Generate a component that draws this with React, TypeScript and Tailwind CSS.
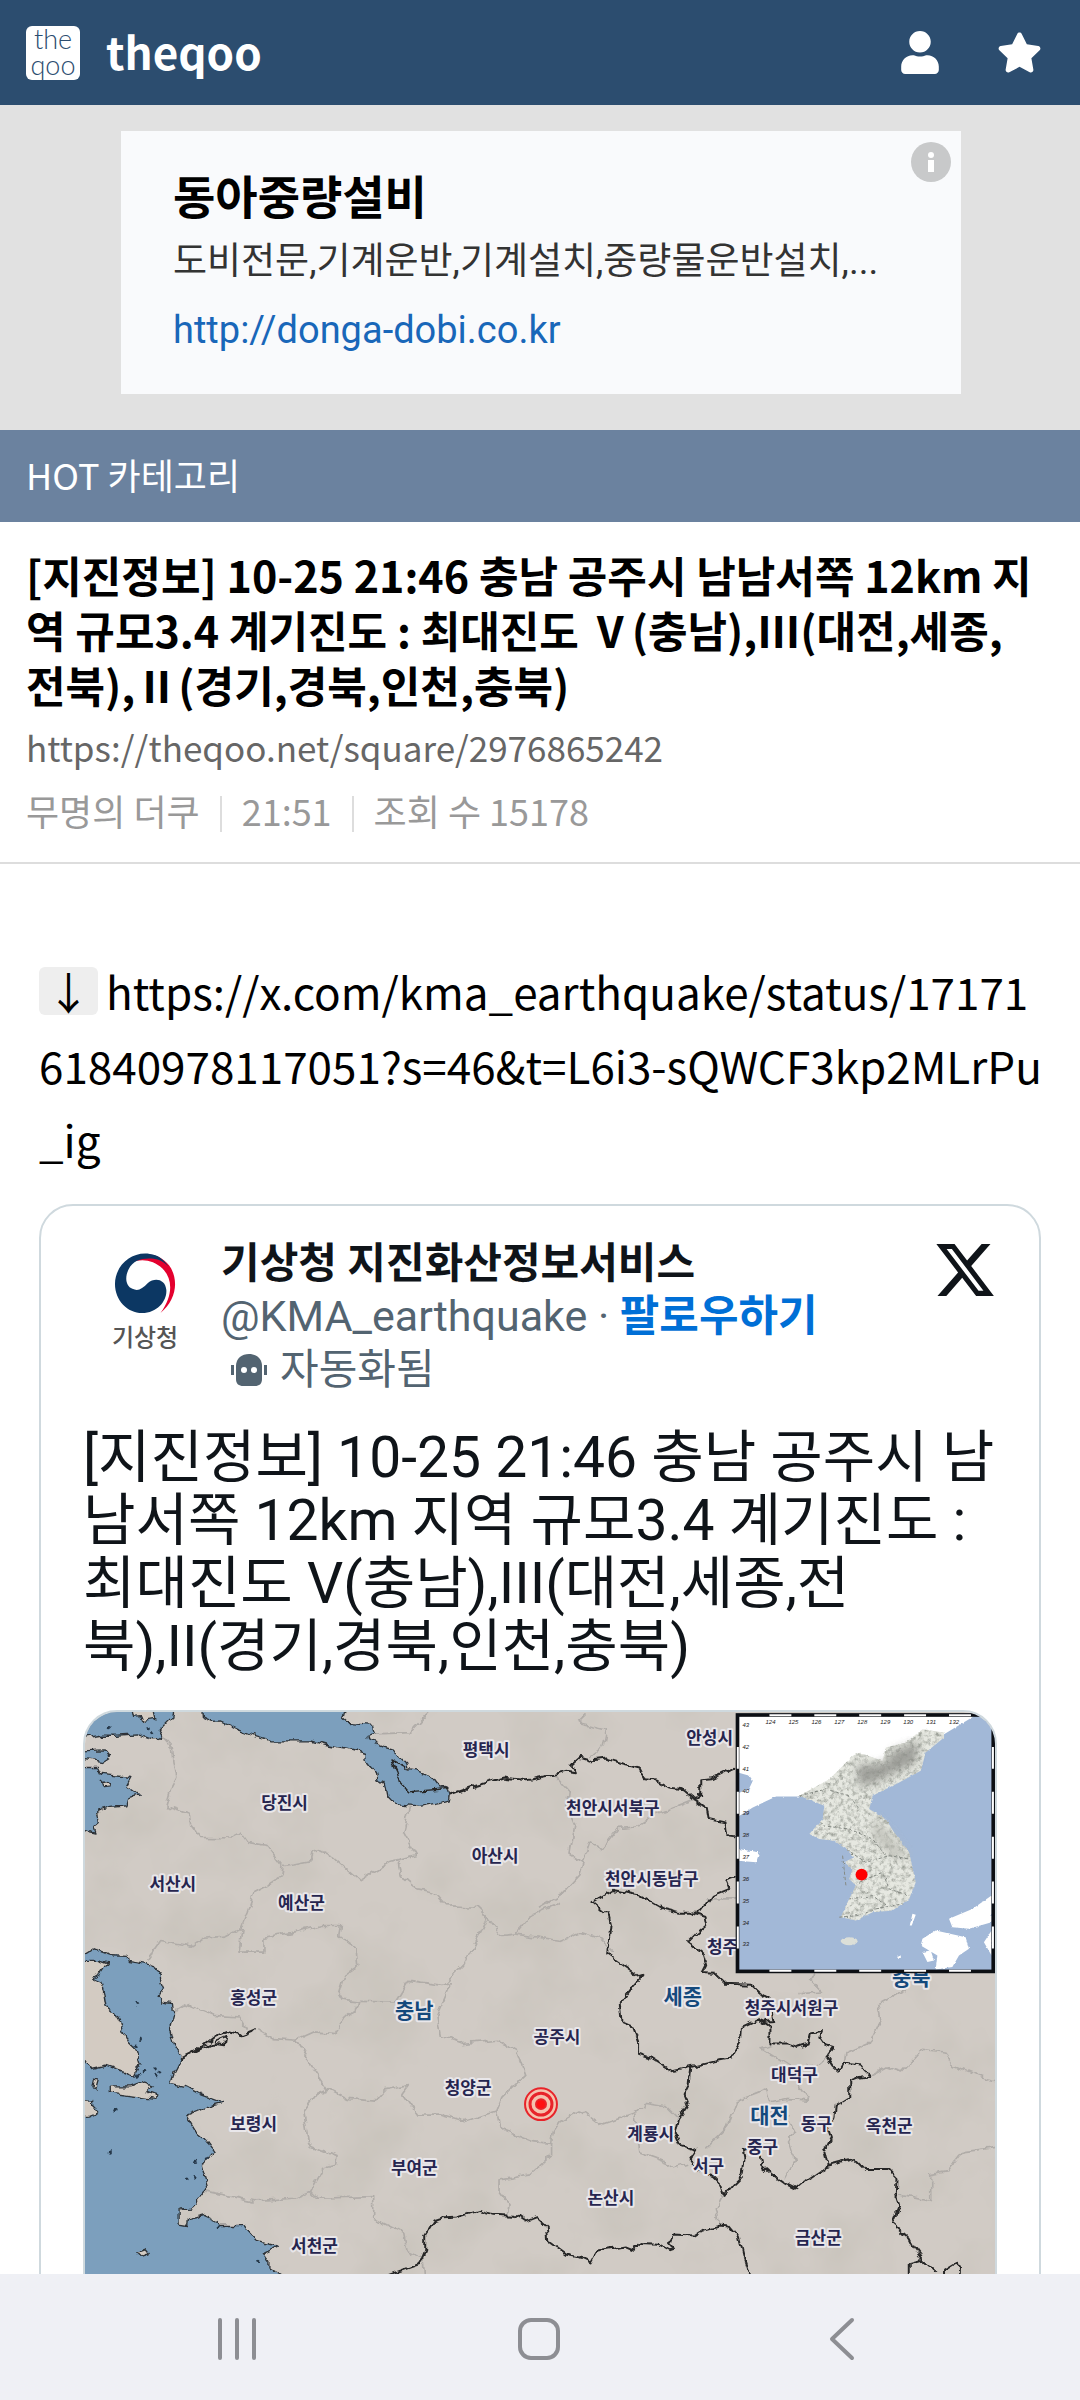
import type { ReactNode } from "react";
import { FaStar, FaUser } from "react-icons/fa";
import { FaXTwitter } from "react-icons/fa6";

type MapLabel = { name: string; x: number; y: number; major?: boolean };

const cities: MapLabel[] = [
  { name: "평택시", x: 402, y: 38 },
  { name: "당진시", x: 200, y: 91 },
  { name: "아산시", x: 411, y: 144 },
  { name: "서산시", x: 88, y: 172 },
  { name: "예산군", x: 217, y: 191 },
  { name: "안성시", x: 626, y: 26 },
  { name: "천안시서북구", x: 529, y: 96 },
  { name: "천안시동남구", x: 568, y: 167 },
  { name: "청주", x: 639, y: 236 },
  { name: "충북", x: 828, y: 267, major: true },
  { name: "세종", x: 599, y: 286, major: true },
  { name: "홍성군", x: 169, y: 287 },
  { name: "충남", x: 330, y: 300, major: true },
  { name: "공주시", x: 473, y: 326 },
  { name: "청양군", x: 384, y: 377 },
  { name: "보령시", x: 169, y: 413 },
  { name: "부여군", x: 330, y: 457 },
  { name: "서천군", x: 230, y: 535 },
  { name: "청주시서원구", x: 708, y: 297 },
  { name: "대덕구", x: 711, y: 364 },
  { name: "대전", x: 686, y: 405, major: true },
  { name: "동구", x: 733, y: 413 },
  { name: "중구", x: 679, y: 436 },
  { name: "서구", x: 625, y: 455 },
  { name: "계룡시", x: 567, y: 423 },
  { name: "논산시", x: 527, y: 487 },
  { name: "옥천군", x: 806, y: 415 },
  { name: "금산군", x: 735, y: 527 },
];

// sea areas on the main map
const seas = [
  "M0 118L60 108 110 108 165 104 215 122 235 120 245 112 235 95 275 55 278 42 278 20 0 20Z",
  "M360 20L362 52 392 66 420 65 470 88 520 108 575 125 690 125 735 138 800 150 855 165 860 190 885 220 890 240 912 248 920 290 945 315 1015 325 1085 312 1108 305 1110 290 1103 268 1080 262 1060 235 1035 220 1010 212 980 208 975 190 950 165 940 150 905 140 880 130 862 122 860 108 885 102 880 78 800 72 785 58 795 20Z",
  "M0 155L70 152 88 175 65 190 0 180Z",
  "M0 205L50 205 60 225 85 228 150 235 135 262 175 290 140 300 135 320 90 325 50 335 55 370 38 385 45 405 0 395Z",
  "M0 775L40 750 90 768 138 770 142 785 190 793 225 805 238 825 240 850 248 868 235 890 245 910 275 915 278 945 268 985 280 1035 300 1070 298 1090 280 1125 270 1155 320 1165 365 1190 425 1212 375 1225 315 1250 345 1300 375 1325 400 1360 365 1400 382 1460 350 1500 352 1520 335 1530 295 1532 295 1578 318 1582 320 1565 370 1552 410 1570 415 1585 490 1585 525 1625 590 1645 548 1665 565 1690 565 1710 620 1740 620 2000 0 2000Z",
];

const islands = [
  "M0 785L50 785 80 795 70 810 60 825 35 840 60 850 70 890 75 920 100 940 115 965 125 995 140 1030 165 1055 178 1095 160 1130 120 1115 75 1100 30 1110 0 1065Z",
  "M85 1165L150 1165 190 1150 215 1160 195 1180 228 1192 222 1203 85 1183Z",
  "M0 1205L35 1205 35 1225 50 1240 25 1250 0 1252Z",
  "M40 1142L52 1145 45 1170 36 1168Z",
  "M168 1660L190 1652 202 1667 182 1674Z",
  "M150 30L215 30 222 60 185 66 180 52 155 54Z",
  "M58 250L80 247 85 260 62 263Z",
];

const districts = [
  "M245 112L275 145 280 190 288 235 270 270 255 322 325 345 330 375 360 415 455 417 485 402 505 430 560 440 605 500 600 530 560 560 520 580 500 640 480 690 430 715 365 722 335 742 240 725 200 782",
  "M605 500L640 495 690 485 695 460 720 455 760 475 840 545 930 490 1008 470 970 400 988 325",
  "M950 490L960 530 1010 570 1060 580 1095 620 1190 625 1222 655 1265 710 1305 705 1350 650 1440 610",
  "M485 690L475 760 550 760 550 715 640 700 720 680 780 680 775 710 830 750 835 800 790 830 775 880 790 905 835 910L830 930 795 960 765 1005 700 1000 645 1025 580 1020 530 990",
  "M645 1025L680 1080 740 1170 800 1200 880 1208 910 1175 985 1158 965 1185 1010 1250 1080 1250 1150 1270 1250 1238 1265 1200 1335 1130 1310 1060 1250 1025 1150 1035 1080 1010 1070 950 1110 855 1085 860 985 845 945 910 835 908",
  "M1090 860L1150 800 1205 690 1222 655",
  "M1305 705L1440 725 1500 700 1560 720 1600 760",
  "M745 1170L710 1185 670 1240 685 1340 770 1375 765 1400 730 1410 690 1480 640 1500 520 1508 370 1478",
  "M690 1480L710 1500 880 1495 880 1560 970 1605 980 1660 1025 1680 1030 1740",
  "M1250 1238L1260 1290 1360 1330 1415 1335 1420 1300 1440 1270 1500 1235 1560 1280 1660 1245 1700 1215 1760 1225 1795 1260",
  "M1415 1335L1415 1370 1350 1430 1260 1445 1260 1480 1290 1520 1285 1550",
  "M280 940L320 915 400 950 480 955 500 990",
  "M885 104L990 100 1045 38",
  "M1520 45L1495 70 1580 90 1570 140 1530 170",
  "M1425 230L1465 275 1460 320 1485 380 1470 465 1510 490 1500 525 1440 590 1380 625",
  "M1845 300L1730 345 1680 380 1620 385 1570 450 1530 430 1510 490",
  "M1880 600L1980 600",
  "M1665 1245L1680 1360 1750 1385 1765 1410 1820 1395",
  "M1930 1490L1910 1530 1920 1580",
  "M1880 1350L1940 1290 1970 1210 2060 1175 2070 1210 2120 1200 2190 1205 2150 1150",
  "M2080 1040L2045 1050 2140 1110 2210 1100 2240 1075",
  "M2125 1250L2150 1300 2125 1320 2145 1385 2115 1440",
  "M2370 1133L2425 1105 2470 1120 2530 1055 2600 1065 2620 1100 2720 1140 2770 1152",
  "M2295 1093L2300 1065 2370 1035 2405 960 2395 915 2480 870",
  "M2460 1490L2555 1510 2555 1430 2605 1420 2650 1360 2770 1345",
  "M2210 825L2190 840 2230 880 2160 885",
];

const provinces = [
  "M1110 287L1180 262 1270 235 1340 243 1420 226 1455 218 1485 222 1475 200 1505 173 1540 183 1580 178 1630 193 1680 205 1698 240 1730 245 1765 265 1810 270 1845 300 1865 285 1865 243 1900 240 1970 205",
  "M1845 300L1885 330 1890 360 1935 370 1940 408 1970 412",
  "M1845 642L1880 620 1900 590 1950 570 1940 545 1970 535",
  "M1535 610L1570 590 1600 573 1680 590 1750 630 1800 642 1835 642 1875 655 1880 680 1850 705 1825 730 1870 765 1880 800 1870 820 1905 822 1940 855 2015 858 2045 885 2070 900 2080 940 2085 970 2060 972 2035 962 1987 985 1985 1020 1950 1080 1900 1090 1835 1105 1780 1118 1720 1080 1675 1065 1675 1025 1660 985 1625 970 1620 915 1655 870 1685 835 1650 810 1585 765 1595 680 1585 640 1570 640Z",
  "M1835 1105L1830 1160 1815 1190 1825 1215 1795 1260 1785 1305 1800 1340 1850 1355 1830 1385 1850 1415 1900 1430 1925 1455 1935 1490 1960 1460 1990 1430 1995 1380 1990 1355 2020 1345 2040 1360 2045 1400 2080 1430 2115 1455 2150 1473 2190 1440 2245 1403 2235 1360 2255 1320 2245 1290 2265 1260 2270 1220 2310 1195 2310 1150 2345 1137 2370 1133 2345 1098 2295 1093 2280 1120 2260 1102 2242 1075 2265 1045 2230 1035 2220 1020 2228 1000 2195 1005 2188 1035 2155 1045 2120 1035 2070 1035 2070 985 2035 962",
  "M2245 1403L2325 1382 2355 1412 2425 1412 2452 1440 2450 1490 2460 1520 2438 1575 2485 1615 2500 1645 2530 1685 2570 1720",
  "M2492 1760L2492 1695 2530 1685",
  "M2595 1760L2595 1718 2628 1697 2643 1705 2642 1760",
  "M900 1740L950 1722 1020 1697 1035 1660 1035 1610 1060 1570 1090 1560 1130 1558 1195 1538 1240 1550 1310 1553 1335 1570 1370 1557 1400 1585 1405 1630 1460 1670 1505 1680 1532 1693 1550 1660 1635 1645 1660 1655 1685 1635 1730 1637 1770 1660 1783 1655 1765 1635 1780 1612 1840 1615 1870 1595 1920 1582 1950 1585 1975 1615 1990 1680 2010 1740",
  "M300 1080L350 1055 400 1015 440 1000 480 1010 525 992M345 1060L395 1035 430 1040 435 1015 400 1030",
];

const isles: [number, number][] = [
  [178, 1025], [165, 1043], [223, 1108], [240, 1120], [228, 1128], [185, 1122], [170, 1130], [88, 1364], [105, 1233],
  [345, 1392], [380, 1382], [318, 1443], [342, 1438], [532, 1690], [410, 1586], [85, 85], [205, 82], [213, 100], [168, 917],
];

const longitudes = [124, 125, 126, 127, 128, 129, 130, 131, 132];
const latitudes = [43, 42, 41, 40, 39, 38, 37, 36, 35, 34, 33];

export default function App() {
  return (
    <div className="flex h-screen flex-col overflow-hidden bg-white font-['Noto_Sans_CJK_KR',sans-serif] text-black">
      <SiteHeader />
      <main className="min-h-0 flex-1 overflow-hidden">
        <AdBanner />
        <div className="flex h-[92px] items-center bg-[#6b829f] px-[26px] pb-1 text-[36px] text-white">HOT 카테고리</div>
        <PostHeading />
        <article className="px-[39px] pt-[90px]">
          <p className="-mr-2 text-[44px] leading-[74px] break-all">
            <span className="mr-2 inline-block w-[59px] rounded-md bg-[#eeeeee] text-center leading-[48px]">↓</span>
            https://x.com/kma_earthquake/status/1717161840978117051?s=46&amp;t=L6i3-sQWCF3kp2MLrPu_ig
          </p>
          <Tweet />
        </article>
      </main>
      <SystemNav />
    </div>
  );
}

function SiteHeader() {
  return (
    <header className="flex h-[105px] shrink-0 items-center justify-between bg-[#2c4d6f] pr-[38px] pl-[26px] text-white">
      <a href="#home" className="flex items-center gap-[26px]">
        <span className="flex h-[54px] w-[54px] flex-col items-center rounded-md bg-white font-['Lato',sans-serif] text-[27px] leading-[26px] font-light text-[#2c4d6f]">
          <span>the</span>
          <span>qoo</span>
        </span>
        <span className="pb-1 text-[44px] leading-none font-bold">theqoo</span>
      </a>
      <nav className="flex items-center gap-[58px]">
        <button aria-label="내 정보">
          <FaUser className="h-[43px] w-[38px]" />
        </button>
        <button aria-label="즐겨찾기">
          <FaStar className="h-[43px] w-[45px]" />
        </button>
      </nav>
    </header>
  );
}

function AdBanner() {
  return (
    <section className="bg-[#e1e1e1] pt-[26px] pr-[119px] pb-9 pl-[121px]">
      <div className="relative h-[263px] bg-[#f9fafc] px-[52px] pt-[37px] font-['Roboto','Noto_Sans_CJK_KR',sans-serif]">
        <h2 className="text-[46px] leading-[60px] font-bold">동아중량설비</h2>
        <p className="text-[37px] leading-[68px] text-[#333333]">도비전문,기계운반,기계설치,중량물운반설치,...</p>
        <a href="#ad" className="block text-[38px] leading-[68px] text-[#1967b9]">
          http://donga-dobi.co.kr
        </a>
        <button aria-label="광고 정보" className="absolute top-[11px] right-[10px]">
          <svg viewBox="0 0 40 40" className="h-10 w-10">
            <circle cx="20" cy="20" r="20" fill="#c8c9ca" />
            <circle cx="20" cy="13" r="3" fill="#fff" />
            <path d="M17 18h6v12h-6z" fill="#fff" />
          </svg>
        </button>
      </div>
    </section>
  );
}

function PostHeading() {
  return (
    <section className="border-b-2 border-[#dddddd] px-[26px] pt-[25px] pb-5">
      <h1 className="text-[43px] leading-[55px] font-bold break-all">
        [지진정보] 10-25 21:46 충남 공주시 남남서쪽 12km 지
        <br />
        역 규모3.4 계기진도 : 최대진도 Ⅴ(충남),Ⅲ(대전,세종,
        <br />
        전북),Ⅱ(경기,경북,인천,충북)
      </h1>
      <p className="mt-1 text-[35px] leading-[62px] text-[#666666]">https://theqoo.net/square/2976865242</p>
      <ul className="flex items-center text-[36px] leading-[64px] text-[#999999]">
        <li>무명의 더쿠</li>
        <Divider />
        <li>21:51</li>
        <Divider />
        <li>조회 수 15178</li>
      </ul>
    </section>
  );
}

function Divider() {
  return <li aria-hidden className="mx-5 mt-2 h-9 w-[2px] bg-[#dddddd]" />;
}

function Tweet() {
  return (
    <div className="mt-7 rounded-[34px] border-2 border-[#cfd9de] px-[42px] pt-[31px] font-['Roboto','Noto_Sans_CJK_KR',sans-serif] text-[#0f1419]">
      <div className="flex">
        <div className="flex h-[124px] w-[124px] flex-col items-center rounded-full pt-4">
          <Taegeuk />
          <span className="text-[24px] leading-[46px] font-medium text-[#555555]">기상청</span>
        </div>
        <div className="ml-[14px] flex-1 text-[42px] leading-[53px] text-[#536471]">
          <div className="font-bold text-[#0f1419]">기상청 지진화산정보서비스</div>
          <div className="text-[43px]">
            @KMA_earthquake ·{" "}
            <a href="#follow" className="font-bold text-[#006fd6]">
              팔로우하기
            </a>
          </div>
          <div className="flex items-center gap-3 pl-[9px]">
            <RobotIcon />
            자동화됨
          </div>
        </div>
        <a href="#x" aria-label="X" className="mt-px">
          <FaXTwitter className="h-16 w-16" />
        </a>
      </div>
      <p className="mt-[30px] text-[57px] leading-[63px]">
        [지진정보] 10-25 21:46 충남 공주시 남
        <br />
        남서쪽 12km 지역 규모3.4 계기진도 :
        <br />
        최대진도 V(충남),III(대전,세종,전
        <br />
        북),II(경기,경북,인천,충북)
      </p>
      <div className="mt-8 overflow-hidden rounded-[34px] border-2 border-[#cfd9de]">
        <QuakeMap />
      </div>
    </div>
  );
}

function Taegeuk() {
  return (
    <svg viewBox="0 0 62 64" className="h-[66px] w-16">
      <path d="M8 16C18-3 44-3 56 13 66 27 64 48 47 62 60 44 60 27 49 16 37 4 18 5 8 16Z" fill="#e4002e" />
      <path d="M36 1C16-2 0 14 0 32 0 49 13 62 28 62 44 62 54 49 53 38 52 27 41 25 34 31 28 37 24 40 18 37 11 34 10 25 14 17 19 7 29 5 40 6 47 7 51 10 55 14 50 6 44 2 36 1Z" fill="#0c3763" />
    </svg>
  );
}

function RobotIcon() {
  return (
    <svg viewBox="0 0 38 34" className="h-[34px] w-[38px]" fill="#536471">
      <path d="M6 13C6 5 12 1 19 1s13 4 13 12v13c0 5-3 7-7 7H13c-4 0-7-2-7-7Z" />
      <path d="M1 12h3v10H1zM34 12h3v10h-3z" />
      <circle cx="14" cy="17" r="3" fill="#fff" />
      <circle cx="24" cy="17" r="3" fill="#fff" />
    </svg>
  );
}

function QuakeMap() {
  return (
    <svg viewBox="0 0 912 640" className="block w-full">
      <defs>
        {/* roughens the coast and border lines */}
        <filter id="rough" x="0" y="0" width="100%" height="100%">
          <feTurbulence type="fractalNoise" baseFrequency="0.09" numOctaves="3" seed="4" />
          <feDisplacementMap in="SourceGraphic" scale="8" xChannelSelector="R" yChannelSelector="G" />
        </filter>
        <filter id="relief" x="0" y="0" width="100%" height="100%">
          <feTurbulence type="fractalNoise" baseFrequency="0.012" numOctaves="4" seed="9" />
          <feColorMatrix values="0 0 0 0 0.5  0 0 0 0 0.48  0 0 0 0 0.42  0.9 0 0 0 -0.4" />
        </filter>
        {/* speckled hills of the peninsula */}
        <filter id="speckle" x="0" y="0" width="100%" height="100%">
          <feTurbulence type="fractalNoise" baseFrequency="0.08" numOctaves="3" seed="2" />
          <feColorMatrix values="0 0 0 0 0.35  0 0 0 0 0.37  0 0 0 0 0.33  0 2.4 0 0 -1" result="grain" />
          <feComposite in="grain" in2="SourceAlpha" operator="in" result="hills" />
          <feMerge>
            <feMergeNode in="SourceGraphic" />
            <feMergeNode in="hills" />
          </feMerge>
        </filter>
        <filter id="soft">
          <feGaussianBlur stdDeviation="12" />
        </filter>
      </defs>
      <rect width="912" height="640" fill="#d1cbc5" />
      <rect width="912" height="640" filter="url(#relief)" />
      <g filter="url(#rough)">
        <g transform="scale(.3333) translate(-12 -38)" strokeLinejoin="round">
          <g fill="#7b9fbd" stroke="#2d3338" strokeWidth="4">
            {seas.map((d) => <path key={d} d={d} />)}
          </g>
          <g fill="#d3cbc2" stroke="#2d3338" strokeWidth="4">
            {islands.map((d) => <path key={d} d={d} />)}
          </g>
          {isles.map(([x, y]) => <circle key={`${x}-${y}`} cx={x} cy={y} r="5" fill="#26384a" />)}
          <g fill="none" stroke="#b0aca8" strokeWidth="5">
            {districts.map((d) => <path key={d} d={d} />)}
          </g>
          <g fill="none" stroke="#282828" strokeWidth="6">
            {provinces.map((d) => <path key={d} d={d} />)}
            <path d="M975 208L935 185 950 215 960 250 985 278 1103 268" strokeWidth="4" />
          </g>
        </g>
      </g>
      {cities.map((c) => <CityLabel key={c.name} {...c} />)}
      <g fill="none" stroke="#e8242a" strokeWidth="2">
        <circle cx="457" cy="393" r="16" fill="#f5c3ae" />
        <circle cx="457" cy="393" r="11" strokeWidth="3" />
        <circle cx="457" cy="393" r="5" fill="#ff1010" />
      </g>
      <KoreaInset />
    </svg>
  );
}

function CityLabel({ name, x, y, major }: MapLabel) {
  return (
    <text
      x={x}
      y={y + (major ? 7 : 6)}
      textAnchor="middle"
      fontFamily="Noto Sans CJK KR, sans-serif"
      fontSize={major ? 21 : 17}
      fontWeight="700"
      fill={major ? "#14497c" : "#26254f"}
      stroke="#e9e7ea"
      strokeWidth="4"
      strokeLinejoin="round"
      paintOrder="stroke"
    >
      {name}
    </text>
  );
}

function KoreaInset() {
  return (
    <g>
      <g transform="scale(.3333) translate(1368 -38)">
        <rect x="590" y="43" width="778" height="779" fill="#a2b8d7" />
        <InsetLand>
          <path d="M595 48H1310L1215 105 1145 160 780 292 710 292 640 325 600 350 595 352Z" fill="#fff" />
          <path d="M595 220L630 230 640 245 628 270 595 282Z" fill="#a2b8d7" />
          <path d="M595 450L660 460 650 490 595 485ZM1150 720L1190 695 1280 715 1290 750 1260 770 1240 805 1190 812 1195 770 1145 740ZM1358 590L1300 630 1230 660 1240 685 1290 690 1358 670ZM1358 695L1335 730 1358 770ZM1120 645L1130 648 1118 680 1112 680ZM1075 770l10 0 0 10-10 0zM1150 760l25-5 10 30-20 5z" fill="#fff" />
          <path
            d="M1150 90L1215 100 1215 115 1160 160 1145 215 1080 250 1000 290 990 330 1040 360 1065 400 1110 460 1130 550 1110 600 1060 635 1000 640 950 665 905 655 920 620 940 580 950 560 930 540 940 510 915 490 945 475 920 450 885 425 840 420 810 405 850 360 855 320 780 290 870 240 940 170 960 160 1030 185 1040 145 1100 130Z"
            fill="#e6e8e1"
            filter="url(#speckle)"
          />
          <path d="M950 200L1040 190 1060 155 1140 125 1130 190 1040 235 960 265Z" fill="#8e8f8a" opacity=".8" filter="url(#soft)" />
          <path d="M1000 350L1060 410 1110 480 1070 480 1000 420Z" fill="#b9bab2" opacity=".7" filter="url(#soft)" />
          <ellipse cx="930" cy="727" rx="25" ry="12" fill="#dcdfd8" />
          <g fill="none" stroke="#858a84" strokeWidth="3" strokeDasharray="10 6">
            <path d="M780 290L860 270 930 290 960 330M850 380L930 390 1000 420 1040 470M920 450L980 490 1050 470 1110 480M960 550L1030 520 1050 570 1110 590M930 600L1000 590 1040 620M900 655L960 650 1010 630 1090 615M910 470L920 560" />
          </g>
        </InsetLand>
        <circle cx="967" cy="527" r="18" fill="#f00" />
        {/* map scale frame */}
        <rect x="594" y="47" width="769" height="771" fill="none" stroke="#0c0f14" strokeWidth="11" />
        <path d="M690 48H1350M690 816H1350" stroke="#fff" strokeWidth="6" strokeDasharray="66 69" />
        <path d="M595 143V810M1362 143V810" stroke="#fff" strokeWidth="6" strokeDasharray="66 69" />
      </g>
      <g fontFamily="Liberation Sans, sans-serif" fontSize="6" fontStyle="italic" fill="#222">
        {longitudes.map((n, i) => <text key={n} x={682 + i * 23} y="12">{n}</text>)}
        {latitudes.map((n, i) => <text key={n} x="659" y={15 + i * 22}>{n}</text>)}
      </g>
    </g>
  );
}

function InsetLand({ children }: { children: ReactNode }) {
  return <g filter="url(#rough)">{children}</g>;
}

function SystemNav() {
  return (
    <nav className="flex h-[126px] shrink-0 items-center justify-between bg-[#eff0f5] px-[212px] pt-[3px] text-[#8d8e93]">
      <button aria-label="최근 앱">
        <svg viewBox="0 0 50 50" className="h-[50px] w-[50px]" stroke="currentColor" strokeWidth="4" strokeLinecap="round">
          <path d="M8 6v38M25 6v38M42 6v38" />
        </svg>
      </button>
      <button aria-label="홈">
        <svg viewBox="0 0 50 50" className="h-[50px] w-[50px]" fill="none" stroke="currentColor" strokeWidth="4">
          <rect x="5" y="6" width="38" height="38" rx="11" />
        </svg>
      </button>
      <button aria-label="뒤로">
        <svg viewBox="0 0 50 50" className="h-[50px] w-[50px]" fill="none" stroke="currentColor" strokeWidth="4" strokeLinecap="round" strokeLinejoin="round">
          <path d="M34 6L14 25l20 19" />
        </svg>
      </button>
    </nav>
  );
}
